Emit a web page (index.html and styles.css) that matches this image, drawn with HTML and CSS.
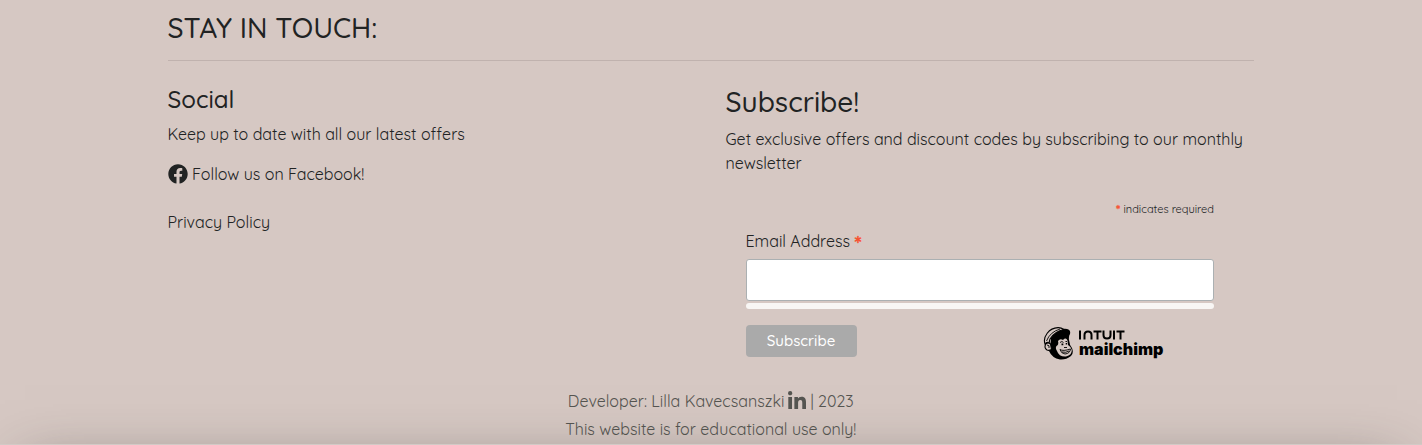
FILE: index.html
```html
<!DOCTYPE html>
<html lang="en">
<head>
<meta charset="utf-8">
<title>Stay in touch</title>
<link rel="stylesheet" href="styles.css">
</head>
<body>
<footer class="footer">
  <h2 class="title"><span>STAY IN TOUCH:</span></h2>
  <div class="columns">
    <section class="social">
      <h4 class="social-title"><span>Social</span></h4>
      <p class="social-text"><span>Keep up to date with all our latest offers</span></p>
      <a class="facebook">
        <svg class="fb-icon" viewBox="0 0 512 512"><path fill="currentColor" d="M504 256C504 119 393 8 256 8S8 119 8 256c0 123.78 90.69 226.38 209.25 245V327.69h-63V256h63v-54.64c0-62.15 37-96.48 93.67-96.48 27.14 0 55.52 4.84 55.52 4.84v61h-31.28c-30.8 0-40.41 19.12-40.41 38.73V256h68.78l-11 71.69h-57.78V501C413.31 482.38 504 379.78 504 256z"/></svg>
        <span>Follow us on Facebook!</span>
      </a>
      <a class="privacy"><span>Privacy Policy</span></a>
    </section>
    <section class="subscribe">
      <h3 class="subscribe-title"><span>Subscribe!</span></h3>
      <p class="subscribe-text"><span>Get exclusive offers and discount codes by subscribing to our monthly</span><br><span class="newsletter">newsletter</span></p>
      <form class="form">
        <div class="required"><b class="star">*</b><span>indicates required</span></div>
        <label class="label" for="email"><span>Email Address</span><b class="star">*</b></label>
        <input class="email" id="email" type="email">
        <div class="response"></div>
        <div class="actions">
          <button class="button" type="button"><span>Subscribe</span></button>
          <div class="brand">
            <svg class="chimp" viewBox="0 0 30 33">
              <path d="M8 13Q6.500 9 10 7Q17 1 24 2Q28 3 27 7Q25.500 9 26 13Q26.500 18 29 21Q31 26 28 29Q23 33 17 32.500Q9 31 6 24Z"/>
              <path class="skin" d="M15 14Q17 11 20 13Q23 10 24.500 13.500L25 18Q28.500 20 28.800 23Q29 28 23 29.500Q16 30 14 24Q12 21 13.500 19Q16 18 15 14Z"/>
              <path class="cap" d="M2 17C-.5 10 6 .8 15 .6Q18 .5 21 2.500Q12 4 7 12L6 16Q4 14.500 2 17Z"/>
              <path class="line" d="M3.500 14Q7 5 17 2"/>
              <path class="cap" d="M7.500 17Q4.500 14.500 2.500 17.500Q1 21 4 23Q6 24 8.500 22.500Z"/>
              <path class="line" d="M4 18Q7 18 6 21"/>
              <path class="line" d="M17 15.500Q19 13.500 20.500 15.500M22.500 14.500L24 14.500M21 20.500H24M17 22.500Q20 24.500 27.500 22Q27 26.500 22 27Q18 26.500 17 22.500M19 25Q23 26 26 24"/>
              <path d="M18.500 16.500h1.800v1.700h-1.800zM22.700 16h1.400v1.500h-1.400z"/>
            </svg>
            <div class="wordmark">
              <svg class="intuit" viewBox="0 0 46 10"><path d="M1 .5V9.500M5.500 9.500V5Q5.500 1.500 9 1.500T12.500 5V9.500M14.500 1.500H22.500M18.500 1.500V9.500M24.500 .5V5Q24.500 8.500 28 8.500T31.500 5V.5M35 .5V9.500M37.500 1.500H45.500M41.500 1.500V9.500"/></svg>
              <span class="mailchimp">mailchimp</span>
            </div>
          </div>
        </div>
      </form>
    </section>
  </div>
  <div class="credits">
    <p class="developer"><span class="dev-name">Developer: Lilla Kavecsanszki</span><svg class="in-icon" viewBox="0 0 448 448"><path fill="currentColor" d="M100.280 448H7.400V148.900h92.880zM53.790 108.100C24.090 108.100 0 83.500 0 53.800a53.790 53.790 0 0 1 107.580 0c0 29.700-24.100 54.300-53.790 54.300zM447.900 448h-92.680V302.400c0-34.700-.7-79.200-48.290-79.200-48.290 0-55.690 37.700-55.690 76.700V448h-92.780V148.900h89.080v40.800h1.300c12.400-23.500 42.690-48.300 87.880-48.300 94 0 111.280 61.900 111.280 142.300V448z"/></svg><span class="dev-year">| 2023</span></p>
    <p class="notice"><span>This website is for educational use only!</span></p>
  </div>
  <div class="shade"></div>
</footer>
</body>
</html>
```
FILE: styles.css
```css
* { box-sizing: border-box; }
body { margin: 0; background: #d6c8c3; color: #212323; font: 16px/24px Quicksand, Lato, sans-serif; }
h2, h3, h4, p { margin: 0; font-weight: 400; white-space: nowrap; }
.footer { position: relative; height: 445px; overflow: hidden; padding: 11px 168px 0 167.5px; }
.title { height: 50px; border-bottom: 1px solid #c0b2ae; font-size: 28px; font-weight: 500; line-height: 34px; }
.columns { display: grid; grid-template-columns: 558px 528px; height: 326px; }
.social { display: flex; flex-direction: column; align-items: flex-start; padding-top: 24px; }
.social-title { font-size: 24px; font-weight: 500; line-height: 28px; margin-bottom: 9px; }
.facebook { display: flex; align-items: center; gap: 4.5px; margin: 16px 0 24px; }
.fb-icon { width: 20px; height: 20px; }
.subscribe { padding-top: 24px; }
.subscribe-title { font-size: 28px; font-weight: 500; line-height: 33px; margin-bottom: 9px; }
.form { padding: 26px 39.5px 0 20px; }
.required { display: flex; justify-content: flex-end; gap: 3px; font-size: 11px; line-height: 16px; }
.star { color: #f8502f; font-size: 13px; -webkit-text-stroke: .3px #f8502f; }
.label { display: flex; gap: 4px; height: 24px; margin: 12px 0 6px; }
.label .star { font-size: 22px; line-height: 28px; }
.email { display: block; width: 468.5px; height: 42px; border: 1px solid #abb0b2; border-radius: 3px; background: #fff; }
.response { height: 6px; margin: 2px 0 16px; border-radius: 3px; background: #f8f6f4; }
.actions { display: flex; justify-content: space-between; padding-right: 50px; }
.button { width: 111px; height: 32px; padding: 0; border: 0; border-radius: 4px; background: #aaa; color: #fff; font: 500 15px/32px Quicksand, Lato, sans-serif; }
.brand { display: flex; gap: 6px; width: 121px; padding-top: 1.5px; }
.chimp { flex: none; width: 30px; height: 33px; }
.skin { fill: #d6c8c3; }
.cap { fill: #d6c8c3; stroke: #000; stroke-width: 1.1; }
.line { fill: none; stroke: #000; stroke-width: .9; }
.wordmark { width: 84px; padding-top: 3.5px; color: #000; }
.intuit { display: block; width: 46px; height: 10px; fill: none; stroke: #000; stroke-width: 2; }
.mailchimp { display: block; font: 900 16px/18px Inter, sans-serif; letter-spacing: 0; }
.credits { color: #555551; text-align: center; }
.credits p { display: flex; justify-content: center; line-height: 28px; }
.developer { gap: 4px; }
.in-icon { width: 18px; height: 18px; margin-top: 4px; }
.shade { position: absolute; left: 0; right: 0; top: 444px; height: 300px; background: #d2cac6; box-shadow: 0 -1px 56px -25px rgba(50,50,45,.55); }
```
